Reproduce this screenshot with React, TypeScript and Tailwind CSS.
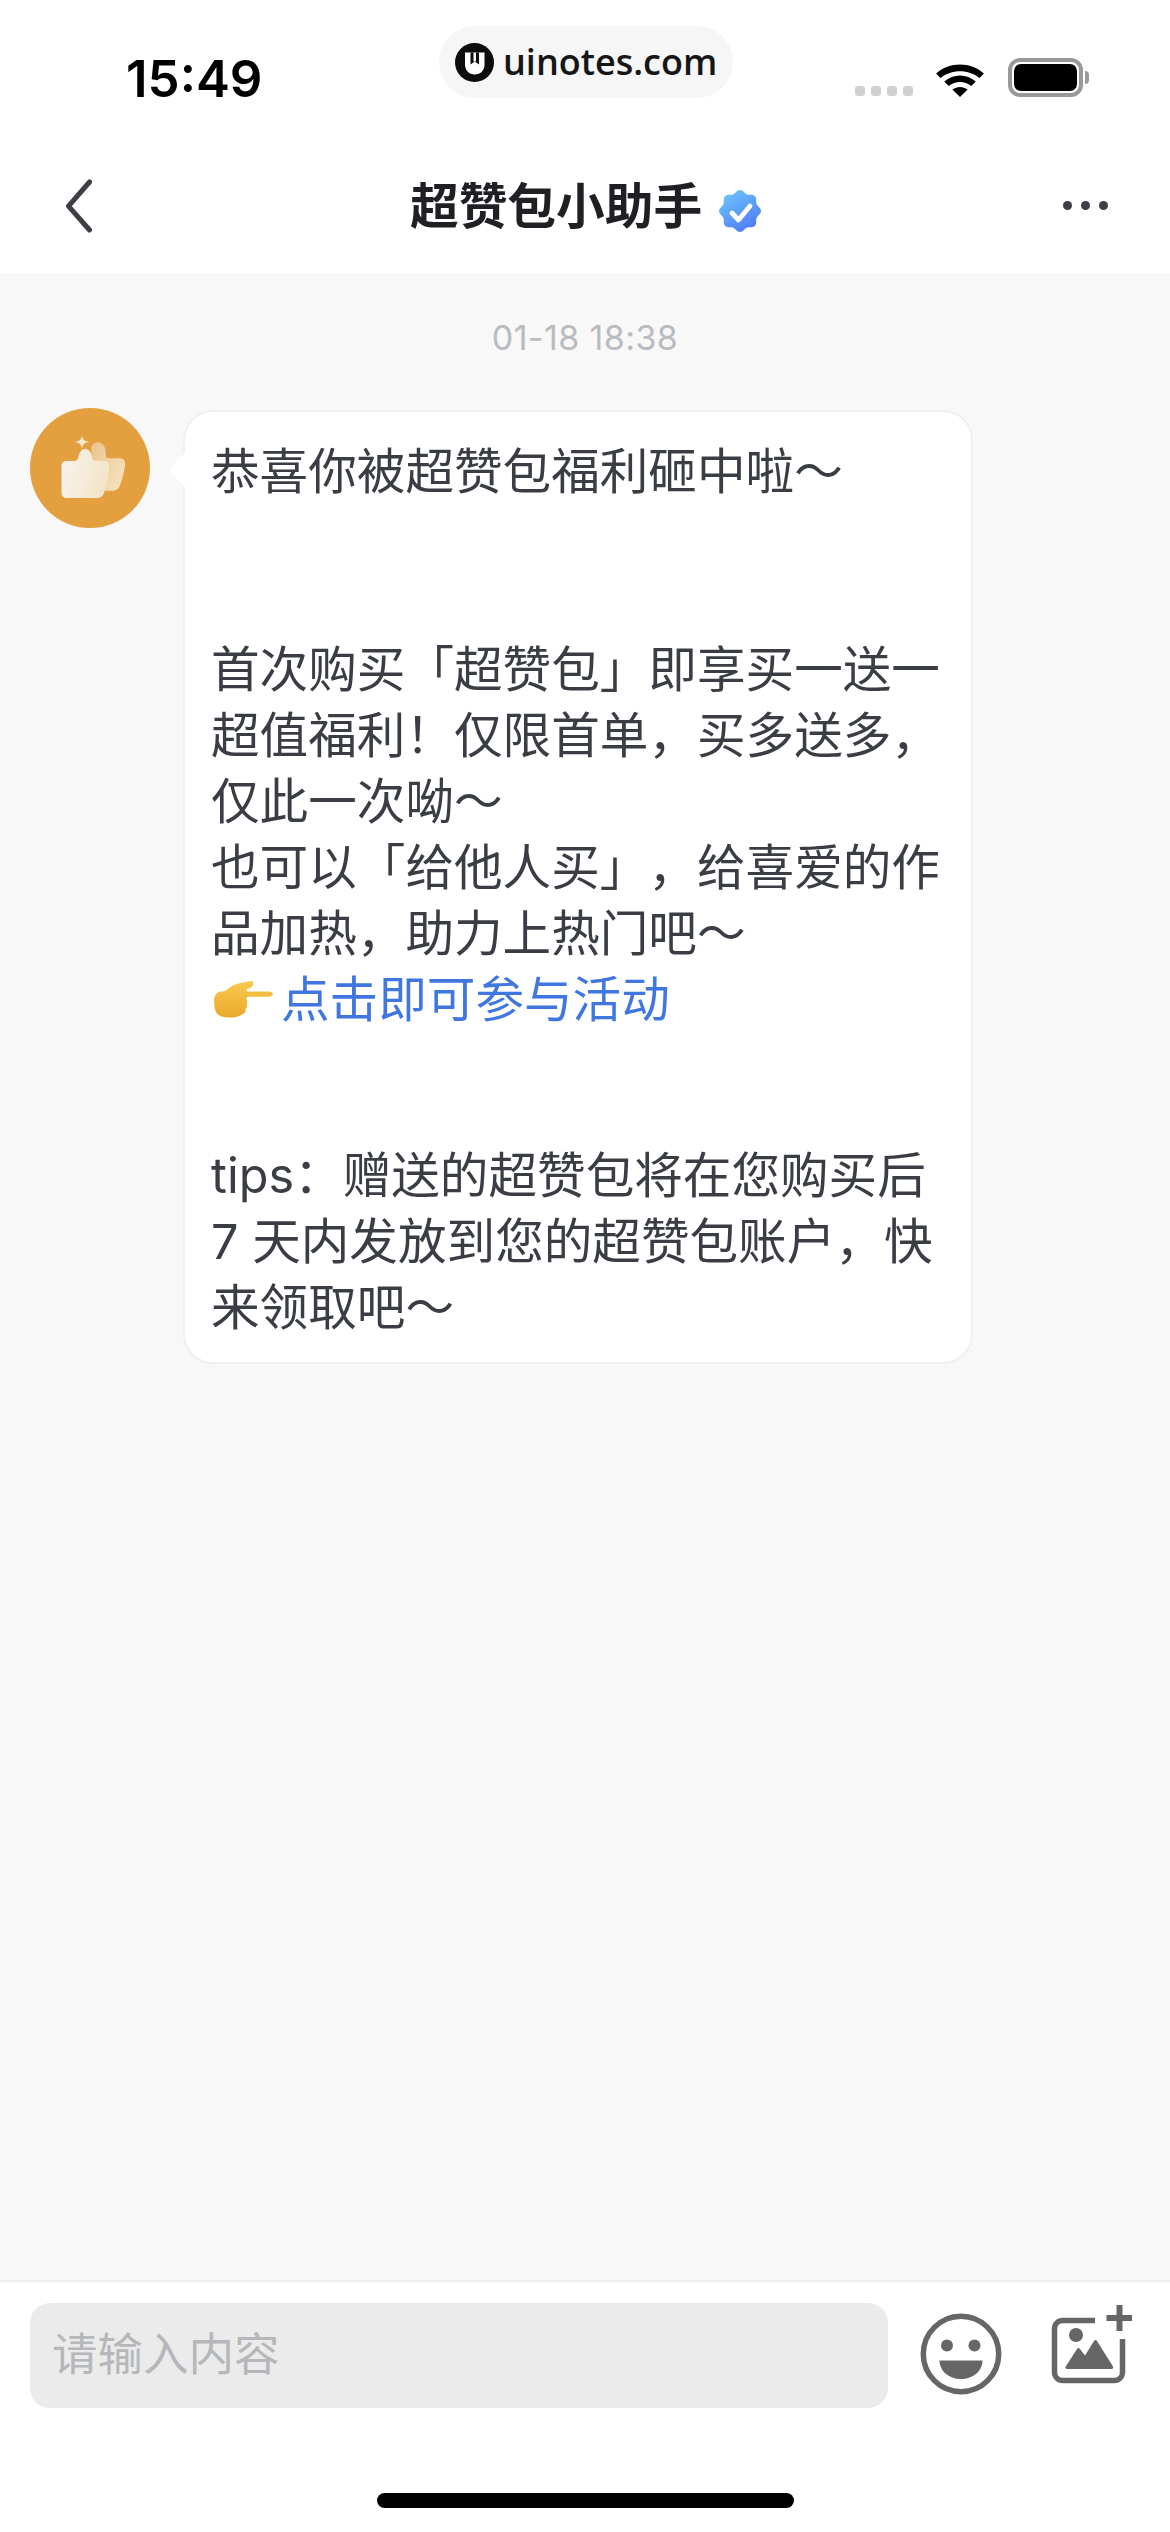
const FONT = "font-['Inter','Noto_Sans_CJK_SC',sans-serif]";

// scalloped verified badge outline
function badgePath(cx: number, cy: number, r: number, amp: number, bumps: number) {
  const pts: string[] = [];
  for (let i = 0; i < 120; i++) {
    const t = (i / 120) * Math.PI * 2;
    const rr = r + amp * Math.cos(bumps * t);
    pts.push(`${(cx + rr * Math.sin(t)).toFixed(2)} ${(cy - rr * Math.cos(t)).toFixed(2)}`);
  }
  return `M${pts.join('L')}Z`;
}

function Logo() {
  return (
    <svg width="39" height="39" viewBox="0 0 39 39" className="shrink-0">
      <circle cx="19.500" cy="19.500" r="19.500" fill="#0d0d0d" />
      <path d="M10 9.500h19.500v12c0 6-4 10-9.750 10S10 27.500 10 21.500z" fill="#ffffff" />
      <path d="M15.500 9.500h3v7.500c0 1 .5 1.500 1.250 1.500S21 18 21 17V9.500h3v12l-4.250-3-4.250 3z" fill="#0d0d0d" />
    </svg>
  );
}

function StatusBar() {
  return (
    <div className="h-[141px] flex items-start bg-white pl-[126px]">
      <span className="mt-[48px] w-[133px] text-[51px] leading-[62px] font-semibold text-black font-['Inter',sans-serif]">15:49</span>
      <div className="ml-[180px] mt-[26px] w-[294px] h-[72px] rounded-[36px] bg-[#f6f6f6] flex items-center pl-[16px] gap-[9px] shrink-0">
        <Logo />
        <span className="text-[36px] leading-[44px] font-semibold text-[#161616] font-['Open_Sans',sans-serif]">uinotes.com</span>
      </div>
      <div className="ml-[122px] mt-[58px] flex items-end shrink-0">
        <div className="flex gap-[6px] mb-[1px]">
          <span className="w-[10px] h-[10px] rounded-[3px] bg-[#d0d0d0]" />
          <span className="w-[10px] h-[10px] rounded-[3px] bg-[#d0d0d0]" />
          <span className="w-[10px] h-[10px] rounded-[3px] bg-[#d0d0d0]" />
          <span className="w-[10px] h-[10px] rounded-[3px] bg-[#d0d0d0]" />
        </div>
        <svg width="50" height="38" viewBox="0 0 46 38" preserveAspectRatio="none" className="ml-[22px]">
          <path d="M1 14.500C13 2.500 33 2.500 45 14.500l-4 4.500C31 10 15 10 5 19z" fill="#000" />
          <path d="M8.500 22.500c8.500-8 20.500-8 29 0l-4.200 4.500c-6-5.500-14.600-5.500-20.600 0z" fill="#000" />
          <path d="M16 30.500c4.200-3.500 9.800-3.500 14 0L23 38z" fill="#000" />
        </svg>
        <div className="ml-[23px] flex items-center">
          <div className="w-[75px] h-[39px] rounded-[12px] border-[4px] border-[#999999] p-[2px] flex">
            <div className="flex-1 rounded-[7px] bg-black" />
          </div>
          <div className="w-[4px] h-[13px] ml-[2px] rounded-r-[4px] bg-[#999999]" />
        </div>
      </div>
    </div>
  );
}

function NavBar() {
  return (
    <div className="h-[132px] flex items-center bg-white pl-[66px] pb-[1px]">
      <svg width="26" height="54" viewBox="0 0 26 54" className="shrink-0 mt-[-1px]">
        <path d="M23.500 3 2.500 27.200 23.500 51" fill="none" stroke="#3c3f44" strokeWidth="5" strokeLinecap="round" strokeLinejoin="round" />
      </svg>
      <span className={`ml-[318px] w-[293px] text-[48.700px] leading-[60px] font-bold text-[#1f2024] whitespace-nowrap ${FONT}`}>超赞包小助手</span>
      <svg width="42" height="42" viewBox="0 0 42 42" className="ml-[16px] mt-[8px] shrink-0">
        <defs>
          <linearGradient id="badge" x1="0.200" y1="0" x2="0.800" y2="1">
            <stop offset="0" stopColor="#6cc6fb" />
            <stop offset="1" stopColor="#4d77f4" />
          </linearGradient>
        </defs>
        <path d={badgePath(21, 21, 19.500, 1.500, 8)} fill="url(#badge)" />
        <path d="M13 23l6.500 7L31 16" fill="none" stroke="#fff" strokeWidth="4.800" strokeLinecap="round" strokeLinejoin="round" />
      </svg>
      <div className="ml-[302px] flex gap-[9px] mb-[2px] shrink-0">
        <span className="w-[9px] h-[9px] rounded-full bg-[#3c3f44]" />
        <span className="w-[9px] h-[9px] rounded-full bg-[#3c3f44]" />
        <span className="w-[9px] h-[9px] rounded-full bg-[#3c3f44]" />
      </div>
    </div>
  );
}

function Avatar() {
  return (
    <div className="w-[120px] h-[120px] rounded-full bg-[#e49f3e] shrink-0">
      <svg width="120" height="120" viewBox="0 0 120 120">
        <defs>
          <linearGradient id="backThumb" x1="0" y1="0" x2="1" y2="0.700">
            <stop offset="0" stopColor="#e9c48d" />
            <stop offset="1" stopColor="#f5e0bd" />
          </linearGradient>
          <linearGradient id="frontThumb" x1="0" y1="0.400" x2="1" y2="0.700">
            <stop offset="0" stopColor="#f6f3ec" />
            <stop offset="1" stopColor="#f3e3c7" />
          </linearGradient>
        </defs>
        <path d="M52 27c.8 4.800 2 6 7 7-5 1-6.200 2.200-7 7-.8-4.800-2-6-7-7 5-1 6.200-2.200 7-7z" fill="#f6e9d2" />
        <path d="M61 40c1-5 6-7 10-5 4 2 5 7 5 13 0 1.500 1 2.200 2.500 2.200H90c4 0 5.500 3 5 7-.6 6-3 15-5 20-1.500 4-4 5.500-8 5.500H66z" fill="url(#backThumb)" />
        <path d="M36 53h7c3.500 0 5-1.500 5.500-4.500C49.300 44 52 41 55 41c4 0 7 4 7.500 9 .2 1.800 1 3 3 3H74c3.500 0 5 2.500 5 5.500 0 8-2.500 20-5 26.500-1.200 3.200-3.500 5-7 5H37c-3 0-5.500-2-5.500-5V58c0-3 2-5 4.500-5z" fill="url(#frontThumb)" />
      </svg>
    </div>
  );
}

function PointingHand() {
  return (
    <svg width="60" height="38" viewBox="0 0 58 40" preserveAspectRatio="none" className="shrink-0 ml-[2px]">
      <defs>
        <linearGradient id="hand" x1="0" y1="0" x2="0" y2="1">
          <stop offset="0" stopColor="#f9c94f" />
          <stop offset="1" stopColor="#eba92a" />
        </linearGradient>
      </defs>
      <path d="M1 20c0-3 1.500-6.500 3.500-8 2-1.200 5-.6 7-1.500C15 8.500 17 5.500 22 3.500 26 2 34 .5 36 0c2-.4 3 1 3 2.500 0 2.500-2 4.500-5.500 6-2 1-1 2.500.5 2.500h20c2.500 0 3.800 1.200 3.800 2.800S56.500 16.500 54 16.500H34c-1.500.3-2 1.500-1.500 3 .8 1.700.8 3.500 0 5 .6 2 .2 3.600-1 5 .2 2.500-.5 4.500-3 5.500-3 2.500-7 3.500-12 3.500-5 0-10-1-12.500-4C2 32 1 26 1 20z" fill="url(#hand)" />
    </svg>
  );
}

function Bubble() {
  return (
    <div className={`relative w-[790px] h-[954px] mt-[2px] pt-[27px] pl-[26px] rounded-[30px] bg-white border-2 border-[#f0f0f0] text-[48.600px] leading-[66px] text-[#3a3e44] whitespace-nowrap [text-spacing-trim:space-all] ${FONT}`}>
      <span className="absolute left-[-12px] top-[46px] w-[24px] h-[24px] rotate-45 bg-white rounded-bl-[4px]" />
      <div className="relative">恭喜你被超赞包福利砸中啦～</div>
      <div className="mt-[132px]">首次购买「超赞包」即享买一送一</div>
      <div>超值福利！仅限首单，买多送多，</div>
      <div>仅此一次呦～</div>
      <div>也可以「给他人买」，给喜爱的作</div>
      <div>品加热，助力上热门吧～</div>
      <div className="flex items-center gap-[8px] text-[#3f76e0]">
        <PointingHand />
        <span>点击即可参与活动</span>
      </div>
      <div className="mt-[110px]">tips：赠送的超赞包将在您购买后</div>
      <div>7 天内发放到您的超赞包账户，快</div>
      <div>来领取吧～</div>
    </div>
  );
}

function InputBar() {
  return (
    <div className="h-[252px] bg-white border-t-2 border-[#eeeeee] flex flex-col">
      <div className="flex items-start pl-[30px] pt-[21px]">
        <div className={`w-[858px] h-[105px] rounded-[20px] bg-[#ebebeb] flex items-center pl-[22px] text-[45.500px] text-[#b5b7ba] ${FONT}`}>请输入内容</div>
        <svg width="82" height="82" viewBox="0 0 82 82" className="ml-[32px] mt-[10px] shrink-0">
          <circle cx="41" cy="41" r="37.700" fill="none" stroke="#666666" strokeWidth="5.500" />
          <circle cx="27" cy="32.500" r="6" fill="#666666" />
          <circle cx="54.500" cy="32.500" r="6" fill="#666666" />
          <path d="M19.500 47.500h43C62.500 58 53 66 41 66s-21.500-8-21.500-18.500z" fill="#666666" />
        </svg>
        <svg width="82" height="82" viewBox="0 0 82 82" className="ml-[48px] mt-[0px] shrink-0">
          <path d="M45 17.500H13c-5 0-8.500 3.500-8.500 8.500v43c0 5 3.500 8.500 8.500 8.500h51c5 0 8.500-3.500 8.500-8.500V36" fill="none" stroke="#666666" strokeWidth="5.500" />
          <path d="M69.500 2v26M56.500 15h27" fill="none" stroke="#666666" strokeWidth="6" />
          <circle cx="26" cy="32" r="7" fill="#666666" />
          <path d="M17 66c-1.200 0-2-1.200-1.400-2.300L27 46c.8-1.200 2.200-1.200 3 0l5 6.500 9-14.500c.8-1.200 2.300-1.200 3 0l16 25.500c.6 1.100-.1 2.500-1.400 2.500z" fill="#666666" />
        </svg>
      </div>
      <div className="mt-auto mb-[24px] mx-auto w-[417px] h-[15px] rounded-full bg-black" />
    </div>
  );
}

export default function App() {
  return (
    <div className="w-[1170px] h-[2532px] flex flex-col bg-[#f8f8f8] overflow-hidden">
      <StatusBar />
      <NavBar />
      <div className="flex-1 flex flex-col">
        <div className="mt-[42px] h-[44px] flex items-center justify-center text-[34px] tracking-[0.4px] text-[#b8bbbf] font-['Inter',sans-serif]">01-18 18:38</div>
        <div className="mt-[49px] pl-[30px] flex gap-[33px] items-start">
          <Avatar />
          <Bubble />
        </div>
      </div>
      <InputBar />
    </div>
  );
}
